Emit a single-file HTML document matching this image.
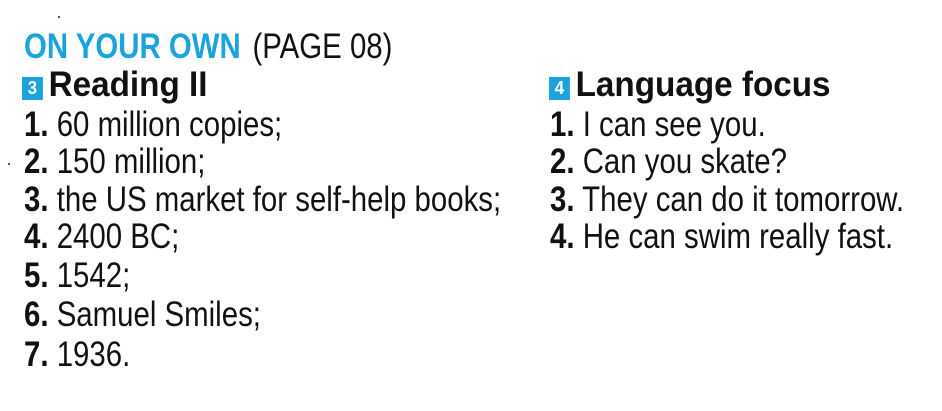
<!DOCTYPE html>
<html><head><meta charset="utf-8"><style>
html,body{margin:0;padding:0;background:#fff;width:942px;height:411px;overflow:hidden;position:relative}
.l{position:absolute;font-family:"Liberation Sans",sans-serif;font-size:35px;color:#111;white-space:nowrap;transform:scaleX(0.84);transform-origin:left bottom;line-height:1}
.b{font-weight:bold}
.blue{color:#1ba3dd;font-weight:bold}
.badge{display:inline-block;width:22px;height:23px;background:#1ba3dd;color:#fff;font-size:18px;font-weight:bold;text-align:center;line-height:23px;vertical-align:2px;margin-right:6px}
.h{font-weight:bold;font-size:35px;transform:scaleX(0.95)}
</style></head><body>
<div class="l" style="left:24px;top:29px"><span class="blue">ON YOUR OWN</span><span style="display:inline-block;width:14px"></span>(PAGE 08)</div>
<div class="l h" style="left:22px;top:67px"><span class="badge">3</span>Reading II</div>
<div class="l" style="left:24px;top:107px"><span class="b">1.</span> 60 million copies;</div>
<div class="l" style="left:24px;top:144px"><span class="b">2.</span> 150 million;</div>
<div class="l" style="left:24px;top:182px"><span class="b">3.</span> the US market for self-help books;</div>
<div class="l" style="left:24px;top:219px"><span class="b">4.</span> 2400 BC;</div>
<div class="l" style="left:24px;top:258px"><span class="b">5.</span> 1542;</div>
<div class="l" style="left:24px;top:297px"><span class="b">6.</span> Samuel Smiles;</div>
<div class="l" style="left:24px;top:337px"><span class="b">7.</span> 1936.</div>
<div class="l h" style="left:549px;top:67px"><span class="badge">4</span>Language focus</div>
<div class="l" style="left:550px;top:107px"><span class="b">1.</span> I can see you.</div>
<div class="l" style="left:550px;top:144px"><span class="b">2.</span> Can you skate?</div>
<div class="l" style="left:550px;top:182px"><span class="b">3.</span> They can do it tomorrow.</div>
<div class="l" style="left:550px;top:219px"><span class="b">4.</span> He can swim really fast.</div>
<div style="position:absolute;left:8px;top:163px;width:2px;height:2px;background:#555"></div>
<div style="position:absolute;left:58px;top:16px;width:2px;height:2px;background:#555"></div>
</body></html>
